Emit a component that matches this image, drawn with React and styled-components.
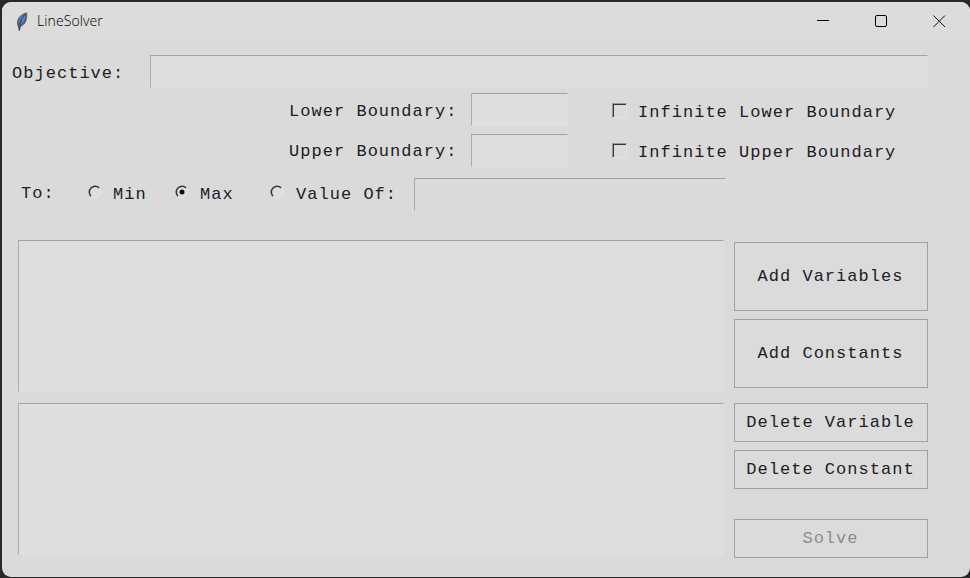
import React from "react";
import styled, { createGlobalStyle, css } from "styled-components";

const GlobalStyle = createGlobalStyle`
  * { box-sizing: border-box; }
  body { margin: 0; background: #29292b; overflow: hidden; }
`;

const Desktop = styled.div`
  width: 970px;
  height: 578px;
  padding: 2px 0 1px 2px;
`;

const Window = styled.main`
  height: 575px;
  border-radius: 9px;
  overflow: hidden;
  background: #dadada;
  color: #202024;
  font: 17px/20px "Liberation Mono", monospace;
  letter-spacing: 1.03px;
  white-space: pre;
`;

const TitleBar = styled.header`
  height: 39px;
  display: flex;
  align-items: center;
  background: #dcdcda;
  padding: 0 23px 0 13px;
`;

const Title = styled.h1`
  flex: 1;
  margin: -2px 0 0 8px;
  font: 300 14px/20px "Open Sans", sans-serif;
  letter-spacing: 0.1px;
  color: #000;
`;

const WindowButtons = styled.div`
  display: flex;
  gap: 42px;
  margin-top: -1px;
`;

const Row = styled.div`
  display: flex;
  align-items: flex-start;
  height: ${(p) => p.$height}px;
`;

const Form = styled.section`
  padding: 14px 0 0 10px;
  height: 199px;
`;

const Label = styled.label`
  width: ${(p) => p.$width}px;
  margin-left: ${(p) => p.$left || 0}px;
  padding-top: ${(p) => p.$top ?? 8}px;
`;

const sunken = css`
  border: 1px solid #dfdfdf;
  border-top-color: #a2a2a2;
  border-left-color: #acacac;
`;

const Entry = styled.input`
  ${sunken}
  width: ${(p) => p.$width}px;
  height: 33px;
  padding: 0 4px;
  border-radius: 0;
  outline: none;
  background: ${(p) => (p.disabled ? "#dadada" : "#dedede")};
  font: inherit;
`;

const Choice = styled.label`
  display: flex;
  width: ${(p) => p.$width}px;
  margin-left: ${(p) => p.$left || 0}px;
  padding-top: ${(p) => p.$top}px;
  gap: ${(p) => p.$gap}px;
`;

const CheckBox = styled.span`
  width: 15px;
  height: 15px;
  border: 1px solid #e2e2e2;
  border-top-color: #999;
  border-left-color: #999;
  box-shadow: inset 1px 1px #333;
`;

const Mark = styled.svg`
  display: block;
  flex: none;
`;

const Body = styled.section`
  display: flex;
  gap: 10px;
  padding-left: 16px;
`;

const Lists = styled.div`
  display: flex;
  flex-direction: column;
  gap: 11px;
`;

const ListBox = styled.div`
  ${sunken}
  width: 706px;
  height: 152px;
  background: #dedede;
`;

const Actions = styled.div`
  display: flex;
  flex-direction: column;
  padding-top: 2px;
`;

const Button = styled.button`
  width: 194px;
  height: ${(p) => p.$height}px;
  margin: 0 0 ${(p) => p.$after || 0}px;
  padding: 0 1px 0 0;
  border: 1px solid #a1a1a1;
  border-radius: 0;
  background: #dbdbdb;
  color: ${(p) => (p.disabled ? "#8c8c90" : "#202024")};
  font: inherit;
  letter-spacing: inherit;
`;

const Feather = () => (
  <Mark width="14" height="20" viewBox="0 0 14 20">
    <path d="M11.8.6C7.5 1 2.5 5.5 2 10c-.2 2 .2 3.5.8 4.6L3.9 18.8h1l.8-4.1c3-1.3 5.6-4.2 6-7.2.3-2.4 1-4.5.1-6.9Z" fill="#59636d" />
    <path d="M10.4 2.6C6.8 5 5 8 5 13.2c3.5-2.5 5.3-5.7 5.4-10.6Z" fill="#478be0" />
    <path d="M8.5 2.8C5 5 3 8 3.2 11.5 4.4 8 6 5.2 8.5 2.8Z" fill="#5c8dc4" />
    <path d="M10.6 2C7.2 5.6 5 10 4.3 18.5" fill="none" stroke="#26384f" strokeWidth=".8" />
  </Mark>
);

const Radio = ({ selected }) => (
  <Mark width="14" height="14" viewBox="0 0 14 14">
    <circle cx="7" cy="7" r="6" fill="#dedede" stroke="#e7e7e7" />
    <path d="M2.9 11.1A5.8 5.8 0 0 1 11.1 2.9" fill="none" stroke="#36363a" strokeWidth="1.6" />
    {selected && <circle cx="7" cy="7" r="2.5" fill="#111" />}
  </Mark>
);

const Boundary = ({ side, height, top, labelTop }) => (
  <Row $height={height}>
    <Label $left={277} $width={182} $top={labelTop}>{side} Boundary:</Label>
    <Entry $width={97} aria-label={`${side} Boundary`} />
    <Choice $left={44} $width={300} $gap={11} $top={top}>
      <CheckBox />Infinite {side} Boundary
    </Choice>
  </Row>
);

export default function App() {
  return (
    <Desktop>
      <GlobalStyle />
      <Window>
        <TitleBar>
          <Feather />
          <Title>LineSolver</Title>
          <WindowButtons>
            <Mark width="16" height="16"><path d="M2 7.5h12" stroke="#000" /></Mark>
            <Mark width="16" height="16"><rect x="2.5" y="2.5" width="11" height="11" rx="1.5" fill="none" stroke="#000" /></Mark>
            <Mark width="16" height="16"><path d="m2.5 2.5 11.5 11.5M14 2.5 2.5 14" stroke="#111" /></Mark>
          </WindowButtons>
        </TitleBar>
        <Form>
          <Row $height={38}>
            <Label $width={138} $top={9}>Objective:</Label>
            <Entry $width={778} aria-label="Objective" />
          </Row>
          <Boundary side="Lower" height={41} top={10} labelTop={9} />
          <Boundary side="Upper" height={44} top={9} labelTop={8} />
          <Row $height={33}>
            <Label $left={9} $width={67} $top={6}>To:</Label>
            <Choice $width={87} $gap={11} $top={7}><Radio /><Label $top={0}>Min</Label></Choice>
            <Choice $width={95} $gap={11} $top={7}><Radio selected /><Label $top={0}>Max</Label></Choice>
            <Choice $width={144} $gap={12} $top={7}><Radio /><Label $top={0}>Value Of:</Label></Choice>
            <Entry $width={312} disabled aria-label="Target value" />
          </Row>
        </Form>
        <Body>
          <Lists><ListBox /><ListBox /></Lists>
          <Actions>
            <Button $height={69} $after={8}>Add Variables</Button>
            <Button $height={69} $after={15}>Add Constants</Button>
            <Button $height={39} $after={8}>Delete Variable</Button>
            <Button $height={39} $after={30}>Delete Constant</Button>
            <Button $height={39} disabled>Solve</Button>
          </Actions>
        </Body>
      </Window>
    </Desktop>
  );
}
